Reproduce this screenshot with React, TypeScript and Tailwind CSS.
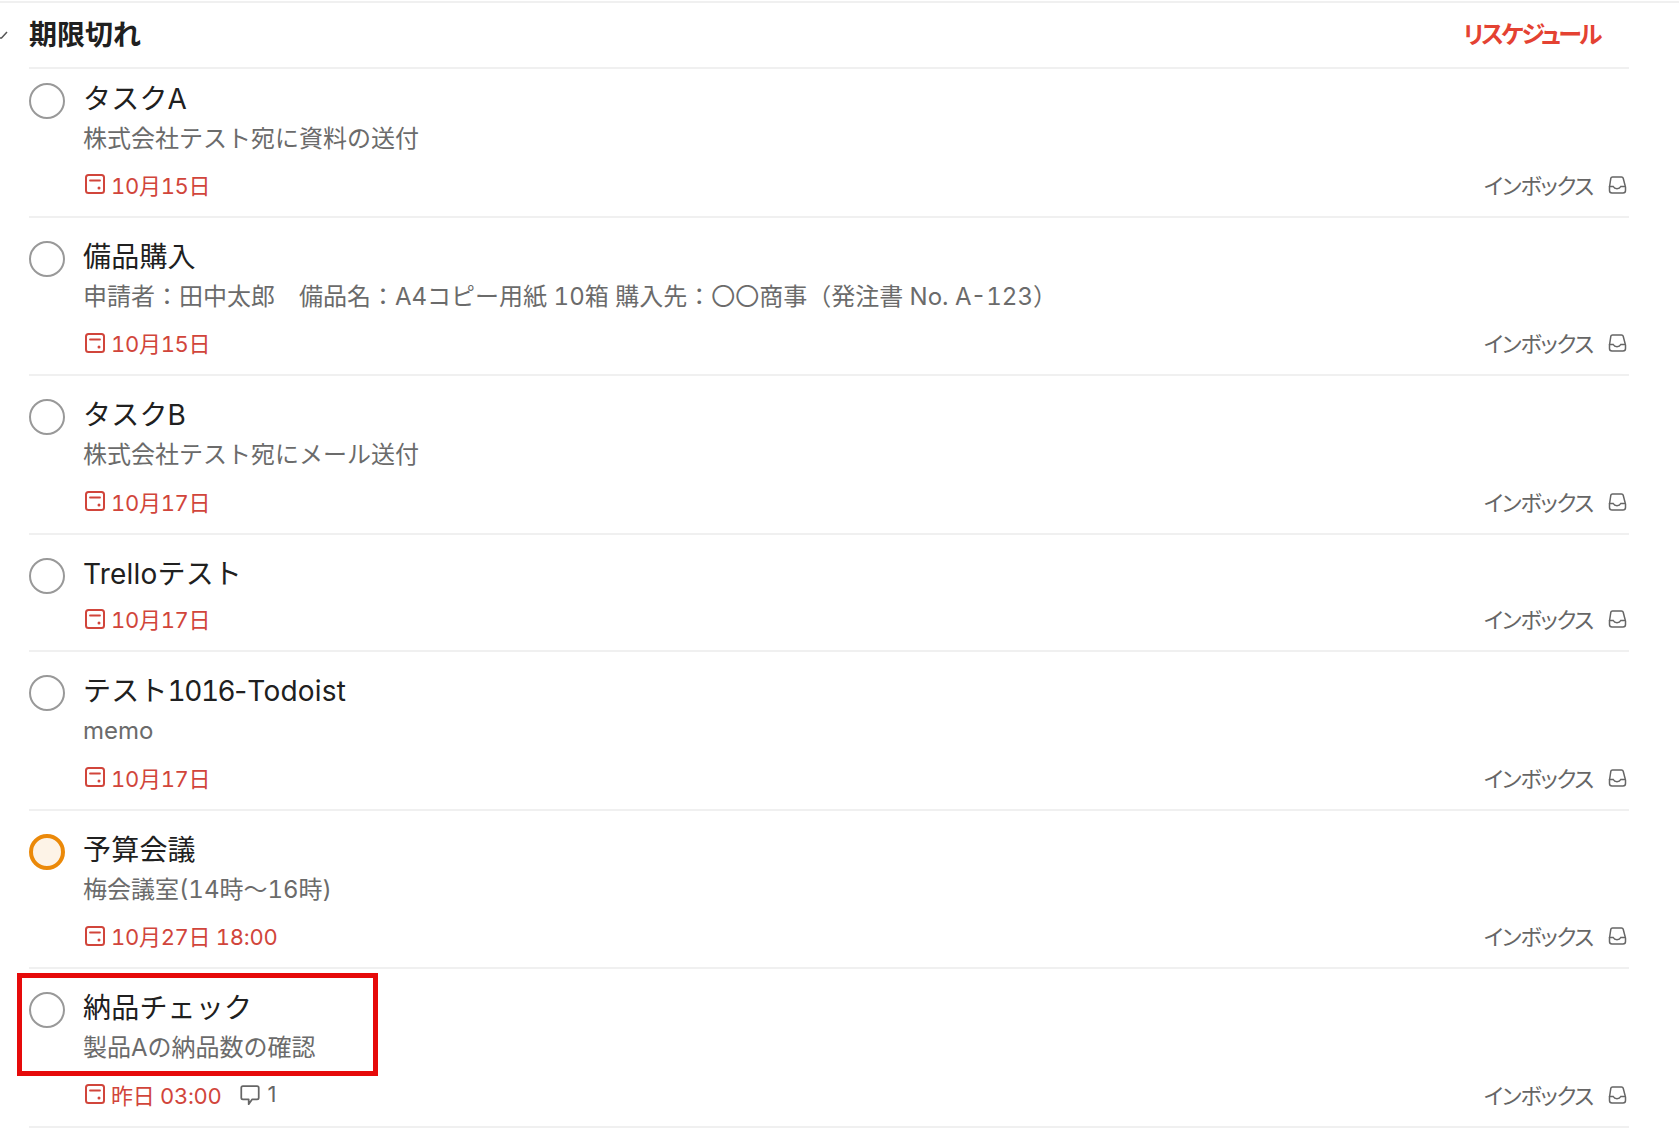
import React from 'react'

interface Task {
  title: React.ReactNode
  description?: string
  due: string
  comments?: number
  priority?: boolean
}

const tasks: Task[] = [
  { title: 'タスクA', description: '株式会社テスト宛に資料の送付', due: '10月15日' },
  { title: '備品購入', description: '申請者：田中太郎　備品名：A4コピー用紙 10箱 購入先：〇〇商事（発注書 No. A-123）', due: '10月15日' },
  { title: 'タスクB', description: '株式会社テスト宛にメール送付', due: '10月17日' },
  { title: 'Trelloテスト', due: '10月17日' },
  { title: <>テスト<span className="tabular-nums tracking-[-1.5px]">1016</span>-Todoist</>, description: 'memo', due: '10月17日' },
  { title: '予算会議', description: '梅会議室(14時〜16時)', due: '10月27日 18:00', priority: true },
  { title: '納品チェック', description: '製品Aの納品数の確認', due: '昨日 03:00', comments: 1 },
]

const CalendarIcon = () => (
  <svg width="20" height="20" viewBox="0 0 20 20" fill="none" className="shrink-0 text-[#d1453b]">
    <rect x="1" y="1" width="18" height="18" rx="2.5" stroke="currentColor" strokeWidth="2" />
    <path d="M5 6.500h10" stroke="currentColor" strokeWidth="1.800" strokeLinecap="round" />
    <circle cx="14" cy="14" r="1.500" fill="currentColor" />
  </svg>
)

const InboxIcon = () => (
  <svg width="20" height="20" viewBox="0 0 20 20" fill="none" className="shrink-0 text-[#666666]">
    <path
      d="M5.500 2h9c.8 0 1.500.5 1.700 1.300l2.300 8.700v3.500c0 1.400-1.100 2.500-2.500 2.500h-11C3.600 18 2.500 16.900 2.500 15.500V12l1.300-8.700C4 2.500 4.700 2 5.500 2z"
      stroke="currentColor"
      strokeWidth="1.500"
    />
    <path d="M2.500 11.500h3.700c.8 1.500 2 2.200 3.800 2.200s3-.7 3.800-2.200h3.700" stroke="currentColor" strokeWidth="1.500" strokeLinecap="round" />
  </svg>
)

const CommentIcon = () => (
  <svg width="22" height="24" viewBox="0 0 20 22" fill="none" className="shrink-0 text-[#666666]">
    <path
      d="M3.500 2h13c1 0 1.500.6 1.500 1.500v9c0 1-.6 1.500-1.500 1.500H12l-3.200 4.500V14H3.500C2.500 14 2 13.400 2 12.500v-9C2 2.600 2.500 2 3.500 2z"
      stroke="currentColor"
      strokeWidth="1.600"
      strokeLinejoin="round"
    />
  </svg>
)

const TaskRow = ({ task, first }: { task: Task; first: boolean }) => (
  <div className={first ? 'flex border-b-2 border-[#f0f0f0] pt-[10px] pb-[11.5px]' : 'flex border-b-2 border-[#f0f0f0] pt-[19px] pb-[11.5px]'}>
    <div
      className={
        task.priority
          ? 'mt-[4px] h-[36px] w-[36px] shrink-0 rounded-full border-[4px] border-[#eb8909] bg-[#fdf3e7]'
          : 'mt-[4px] h-[36px] w-[36px] shrink-0 rounded-full border-[2px] border-[#999999]'
      }
    />
    <div className="ml-[18px] min-w-0 flex-1">
      <div className="h-[40px] text-[28px] leading-[40px] tracking-[0.2px] text-[#202020]">{task.title}</div>
      {task.description && (
        <div className="h-[41px] text-[24px] leading-[40px] tabular-nums text-[#6b6b6b]">{task.description}</div>
      )}
      <div className={first ? 'mt-[8px] flex h-[36px] items-center text-[22px]' : 'mt-[9px] flex h-[36px] items-center text-[22px]'}>
        <div className="ml-[2px] -mt-[4px]">
          <CalendarIcon />
        </div>
        <span className="ml-[6px] tabular-nums tracking-[-0.3px] text-[#d1453b]">{task.due}</span>
        {task.comments && (
          <span className="ml-[18px] flex items-center gap-[6px] text-[#666666]">
            <CommentIcon />
            <span className="-mt-[4px]">{task.comments}</span>
          </span>
        )}
        <div className="ml-auto flex items-center gap-[14px] pr-[2px] text-[#666666]">
          <span className="tracking-[-1.2px] [font-feature-settings:'palt']">インボックス</span>
          <div className="-mt-[3px]">
            <InboxIcon />
          </div>
        </div>
      </div>
    </div>
  </div>
)

export default function App() {
  return (
    <div
      className="relative h-[1135px] w-full overflow-hidden bg-white pl-[29px] pr-[50px] pt-[1px]"
      style={{ fontFamily: 'Inter, "Noto Sans CJK JP", sans-serif' }}
    >
      <div className="-ml-[29px] -mr-[50px] h-[2px] bg-[#f0f0f0]" />
      <svg width="10" height="10" viewBox="0 0 10 10" fill="none" className="absolute left-0 top-[30px] text-[#555555]">
        <path d="M0 8l1.500 0L7 2" stroke="currentColor" strokeWidth="1.500" />
      </svg>
      <div className="flex h-[66px] items-center justify-between border-b-2 border-[#f0f0f0] pr-[29px]">
        <span className="text-[28px] font-bold text-[#202020]">期限切れ</span>
        <span className="text-[24px] font-bold tracking-[-2.6px] text-[#e44232] [font-feature-settings:'palt']">リスケジュール</span>
      </div>
      {tasks.map((task, index) => (
        <TaskRow key={index} task={task} first={index === 0} />
      ))}
      <div className="absolute left-[17px] top-[973px] h-[103px] w-[361px] border-[5px] border-[#e60a0a]" />
    </div>
  )
}
